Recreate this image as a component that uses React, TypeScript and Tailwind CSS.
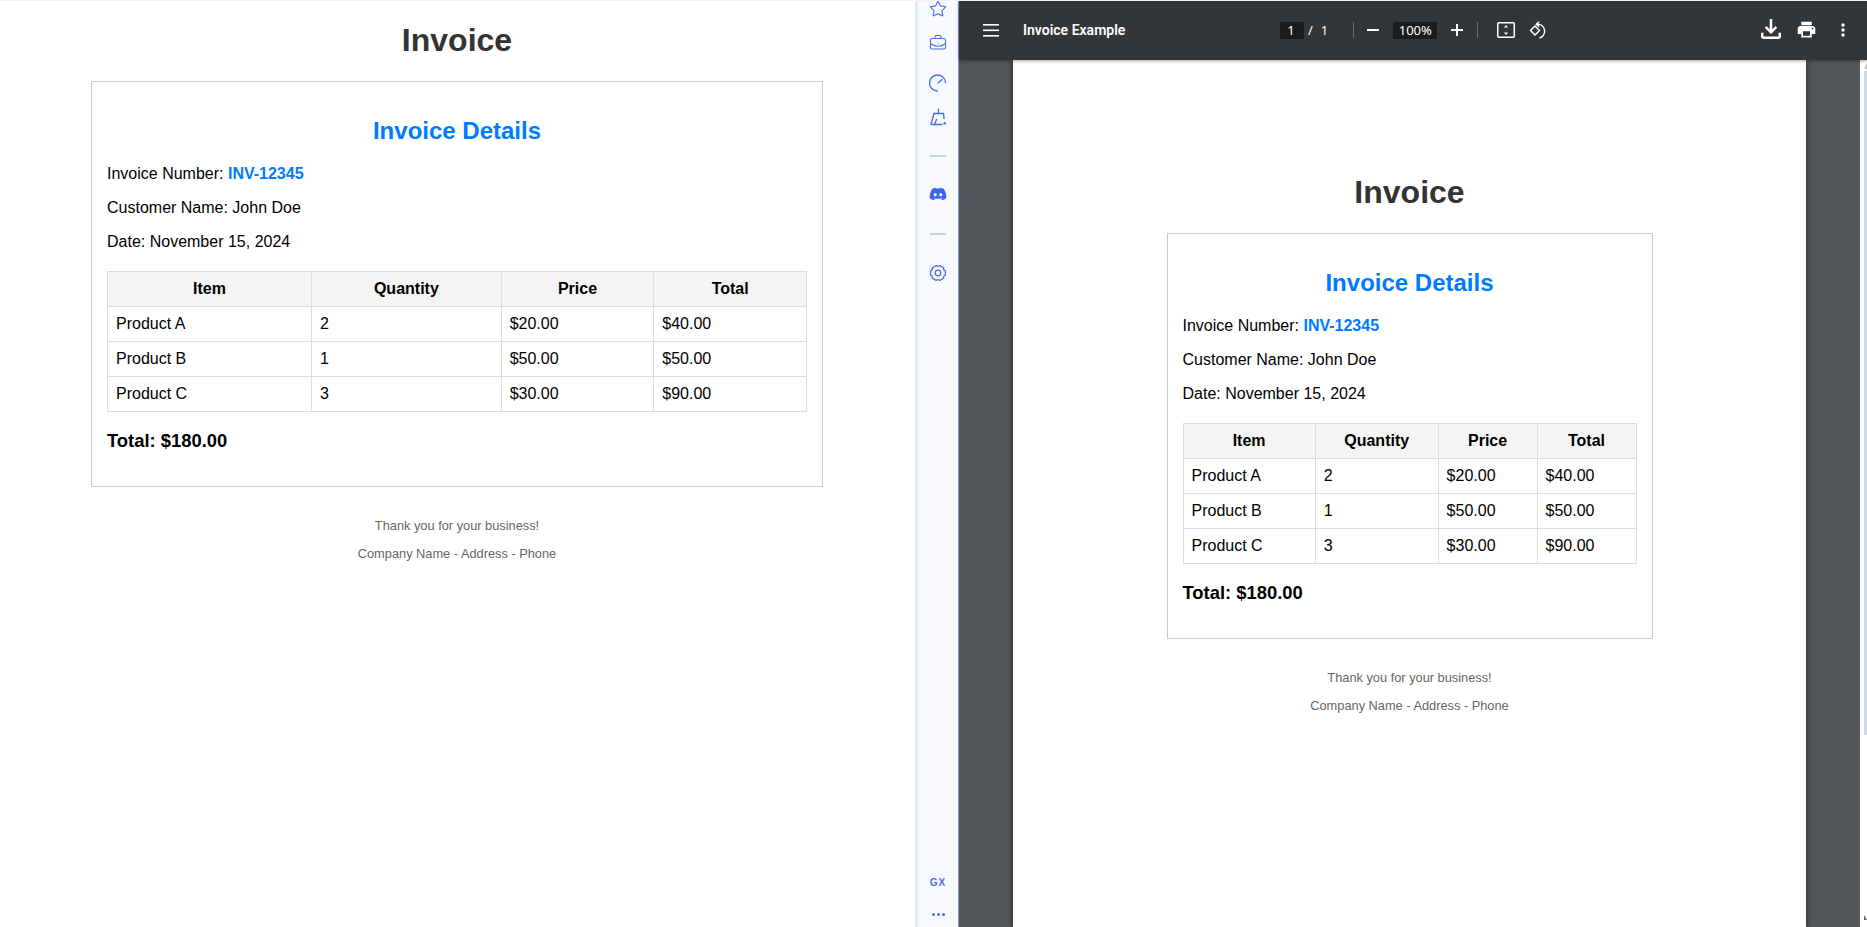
import { BriefcaseBusiness, Star } from "lucide-react";
import { FaDiscord } from "react-icons/fa";

const rows = [
  ["Product A", "2", "$20.00", "$40.00"],
  ["Product B", "1", "$50.00", "$50.00"],
  ["Product C", "3", "$30.00", "$90.00"],
];

function InvoiceDoc({ cardClass }: { cardClass: string }) {
  return (
    <div className="font-['Liberation_Sans',Arial,sans-serif] text-[16px] leading-[18px] text-black">
      <h1 className="mt-[21px] mb-[22px] text-center text-[32px] leading-[37px] font-bold text-[#333]">Invoice</h1>
      <div className={`mx-auto border border-[#ccc] bg-white p-[15px] ${cardClass}`}>
        <h2 className="mt-[20px] mb-[21px] text-center text-[24px] leading-[27px] font-bold text-[#007bff]">Invoice Details</h2>
        <p className="mb-4">
          Invoice Number: <span className="font-bold text-[#007bff]">INV-12345</span>
        </p>
        <p className="mb-4">Customer Name: John Doe</p>
        <p>Date: November 15, 2024</p>
        <table className="mt-[20px] w-full border-collapse">
          <thead>
            <tr>
              <th className="border border-[#ddd] bg-[#f4f4f4] p-2 text-center font-bold">Item</th>
              <th className="border border-[#ddd] bg-[#f4f4f4] p-2 text-center font-bold">Quantity</th>
              <th className="border border-[#ddd] bg-[#f4f4f4] p-2 text-center font-bold">Price</th>
              <th className="border border-[#ddd] bg-[#f4f4f4] p-2 text-center font-bold">Total</th>
            </tr>
          </thead>
          <tbody>
            {rows.map((row) => (
              <tr key={row[0]}>
                {row.map((cell, i) => (
                  <td key={i} className="border border-[#ddd] p-2 text-left">
                    {cell}
                  </td>
                ))}
              </tr>
            ))}
          </tbody>
        </table>
        <p className="mt-[18px] mb-[20px] text-[18.4px] leading-[21px] font-bold">Total: $180.00</p>
      </div>
      <div className="mt-[31px] text-center text-[12.8px] leading-[15px] text-[#666]">
        <p className="mb-[13px]">Thank you for your business!</p>
        <p>Company Name - Address - Phone</p>
      </div>
    </div>
  );
}

function Sidebar() {
  return (
    <div className="flex w-[44px] shrink-0 flex-col items-center border-r border-r-[#7f97dc] border-l-[3px] border-l-[#e4e9f6] bg-[#f7f9fe] text-[#4a72d9]">
      <Star className="-mt-[1px] h-[18px] w-[18px]" strokeWidth={1.5} />
      <BriefcaseBusiness className="mt-[16px] h-[18px] w-[18px]" strokeWidth={1.5} />
      <svg className="mt-[22px] h-[18px] w-[18px]" viewBox="0 0 18 18" fill="none" stroke="currentColor" strokeWidth="1.3" strokeLinecap="round">
        <path d="M16.5 8.5A8 8 0 1 0 8.5 17" />
        <path d="M9 9l4-3.5" />
      </svg>
      <svg className="mt-[16px] h-[18px] w-[18px]" viewBox="0 0 18 18" fill="none" stroke="currentColor" strokeWidth="1.4" strokeLinejoin="round" strokeLinecap="round">
        <path d="M9.5 1v4.5" />
        <path d="M5 5.5h9.5l.5 5" />
        <path d="M5 5.5 2 16.5h11" />
        <path d="M7.5 11.5 5.5 16.5" />
        <circle cx="15.8" cy="15.3" r="1.3" fill="currentColor" stroke="none" />
      </svg>
      <div className="mt-[29px] h-[2px] w-[16px] bg-[#c3cff0]" />
      <FaDiscord className="mt-[28px] h-[18px] w-[18px] text-[#3a66ee]" />
      <div className="mt-[30px] h-[2px] w-[16px] bg-[#c3cff0]" />
      <svg className="mt-[29px] h-[18px] w-[18px]" viewBox="0 0 18 18" fill="none" stroke="currentColor" strokeWidth="1.3" strokeLinejoin="round">
        <path d="M7.2 1.6Q9 3.2 10.8 1.6L14.6 3.8Q14.1 6.1 16.4 6.8V11.2Q14.1 11.9 14.6 14.2L10.8 16.4Q9 14.8 7.2 16.4L3.4 14.2Q3.9 11.9 1.6 11.2V6.8Q3.9 6.1 3.4 3.8Z" />
        <circle cx="9" cy="9" r="2.8" />
      </svg>
      <div className="mt-auto mb-[24px] font-['Liberation_Sans',sans-serif] text-[10px] leading-[12px] font-bold tracking-[1px]">GX</div>
      <div className="mb-[11px] flex gap-[2px]">
        <span className="h-[3px] w-[3px] rounded-full bg-[#4a72d9]" />
        <span className="h-[3px] w-[3px] rounded-full bg-[#4a72d9]" />
        <span className="h-[3px] w-[3px] rounded-full bg-[#4a72d9]" />
      </div>
    </div>
  );
}

function Toolbar() {
  return (
    <div className="z-10 flex h-[59px] shrink-0 items-center bg-[#323639] pb-[1px] font-['Noto_Sans',sans-serif] text-white shadow-[0_1px_3px_rgba(0,0,0,0.35)]">
      <svg className="ml-[24px] h-[13px] w-[16px]" viewBox="0 0 16 13" fill="white">
        <rect width="16" height="1.6" y="0" />
        <rect width="16" height="1.6" y="5.5" />
        <rect width="16" height="1.6" y="11" />
      </svg>
      <div className="ml-[24px] w-[257px] font-['Roboto',sans-serif] text-[14px] leading-[18px] font-semibold">Invoice Example</div>
      <div className="h-[17px] w-[24px] bg-[#191b1c] pr-[2px] text-center text-[13px] leading-[17px]">1</div>
      <span className="ml-[4px] text-[13px] leading-[17px]">/</span>
      <span className="ml-[8px] text-[13px] leading-[17px]">1</span>
      <div className="ml-[25px] h-[16px] w-[1px] bg-[#6b6f72]" />
      <div className="ml-[13px] h-[2px] w-[12px] bg-white" />
      <div className="ml-[14px] h-[17px] w-[44px] bg-[#191b1c] text-center text-[13px] leading-[17px]">100%</div>
      <svg className="ml-[14px] h-[12px] w-[12px]" viewBox="0 0 12 12" fill="white">
        <rect x="5" width="2" height="12" />
        <rect y="5" width="12" height="2" />
      </svg>
      <div className="ml-[14px] h-[16px] w-[1px] bg-[#6b6f72]" />
      <svg className="ml-[19px] h-[16px] w-[18px]" viewBox="0 0 18 16" fill="none">
        <rect x="0.75" y="0.75" width="16.5" height="14.5" rx="1" stroke="white" strokeWidth="1.5" />
        <path d="M9 3l2 2.4H7zM9 13l2-2.4H7z" fill="white" />
      </svg>
      <svg className="ml-[14px] h-[18px] w-[18px]" viewBox="0 0 18 18" fill="none" stroke="white" strokeWidth="1.5">
        <path d="M1.5 9.5 6 5l4.5 4.5L6 14z" strokeLinejoin="round" />
        <path d="M7.5 3.3h2a7 7 0 0 1 1 13.7" />
        <path d="M10 0.8 7.3 3.3 10 5.8" />
      </svg>
      <svg className="-mt-[2px] ml-[209px] h-[30px] w-[30px]" viewBox="0 0 24 24" fill="white">
        <path d="M12 16l-5-5 1.4-1.45 2.6 2.6V4h2v8.15l2.6-2.6L17 11l-5 5Zm-6 4c-.55 0-1.02-.2-1.41-.59C4.2 19.02 4 18.55 4 18v-3h2v3h12v-3h2v3c0 .55-.2 1.02-.59 1.41-.39.39-.86.59-1.41.59H6Z" />
      </svg>
      <svg className="-mt-[1px] ml-[10px] h-[21px] w-[21px]" viewBox="0 0 24 24" fill="white">
        <path d="M19 8H5c-1.66 0-3 1.34-3 3v6h4v4h12v-4h4v-6c0-1.66-1.34-3-3-3zm-3 11H8v-5h8v5zm3-7c-.55 0-1-.45-1-1s.45-1 1-1 1 .45 1 1-.45 1-1 1zm-1-9H6v4h12V3z" />
      </svg>
      <svg className="ml-[24px] h-[16px] w-[4px]" viewBox="0 0 4 16" fill="white">
        <circle cx="2" cy="3" r="1.7" />
        <circle cx="2" cy="8" r="1.7" />
        <circle cx="2" cy="13" r="1.7" />
      </svg>
    </div>
  );
}

function Scrollbar() {
  return (
    <div className="flex w-[7px] shrink-0 flex-col bg-white pl-[4px]">
      <svg className="mt-[3px] h-[6px] w-[3px]" viewBox="0 0 3 6" fill="#c4c4c4">
        <path d="M3 0v6H0z" />
      </svg>
      <div className="mt-[2px] h-[664px] w-[3px] bg-[#cdd9e6]" />
      <svg className="mt-auto mb-[7px] h-[5px] w-[3px]" viewBox="0 0 3 5" fill="#666">
        <path d="M0 0l3 5H0z" />
      </svg>
    </div>
  );
}

export default function App() {
  return (
    <div className="flex h-[927px] w-full overflow-hidden border-t border-t-[#f2f2f2] bg-white">
      <div className="w-[915px] shrink-0">
        <div className="w-[914px]">
          <InvoiceDoc cardClass="w-[732px]" />
        </div>
      </div>
      <Sidebar />
      <div className="flex min-w-0 flex-1 flex-col">
        <Toolbar />
        <div className="flex min-h-0 flex-1 bg-[#525659]">
          <div className="flex min-w-0 flex-1 pl-[54px]">
            <div className="w-[793px] shrink-0 bg-white pt-[93px] shadow-[0_0_6px_rgba(0,0,0,0.6)]">
              <InvoiceDoc cardClass="w-[486px]" />
            </div>
          </div>
          <Scrollbar />
        </div>
      </div>
    </div>
  );
}
